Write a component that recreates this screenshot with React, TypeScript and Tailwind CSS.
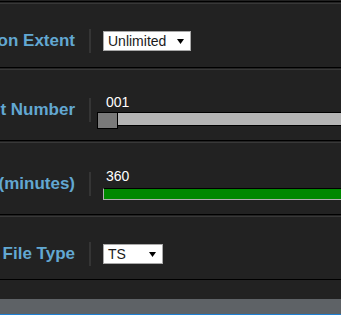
const font = { fontFamily: '"Liberation Sans", Arial, sans-serif' };

function Label({ text }: { text: string }) {
  return (
    <div className="flex h-6 w-[75px] shrink-0 items-center justify-end whitespace-nowrap text-[17px] font-bold text-[#62a8d2]">
      {text}
    </div>
  );
}

function Divider() {
  return <div className="ml-[14px] h-6 w-[2px] shrink-0 bg-[#353535]" />;
}

function FakeSelect({ value, width }: { value: string; width: string }) {
  return (
    <div
      className={`flex h-5 ${width} items-center justify-between border border-[#a9a9a9] bg-white pl-[4px] pr-[6px] text-[14px] leading-[18px] text-[#1a1a1a]`}
    >
      <span>{value}</span>
      <svg width="7" height="5" viewBox="0 0 7 5">
        <path d="M0 0 L7 0 L3.5 5 Z" fill="#000" />
      </svg>
    </div>
  );
}

function Row({
  label,
  height,
  pt,
  children,
}: {
  label: string;
  height: string;
  pt: string;
  children: React.ReactNode;
}) {
  return (
    <div
      className={`mt-px flex items-start border-t border-b border-t-[#383838] border-b-black ${height} ${pt}`}
    >
      <Label text={label} />
      <Divider />
      <div className="ml-[12px]">{children}</div>
    </div>
  );
}

export default function App() {
  return (
    <div
      className="h-[315px] w-[341px] overflow-hidden bg-[#222222]"
      style={font}
    >
      <div className="h-[2px] border-b border-black" />

      <Row label="Rotation Extent" height="h-[65px]" pt="pt-[25px]">
        <div className="flex h-6 items-center">
          <FakeSelect value="Unlimited" width="w-[88px]" />
        </div>
      </Row>

      <Row label="Start Segment Number" height="h-[72px]" pt="pt-[28px]">
        <div className="-mt-[3px] w-[280px]">
          <div className="pl-[3px] text-[14px] leading-[15px] text-white">001</div>
          <div className="relative mt-[2px] h-[17px]">
            <div className="mt-px h-[14px] border border-black bg-[#b5b5b5]" />
            <div className="absolute -left-[6px] top-0 h-[17px] w-[21px] border border-black bg-[#7a7a7a]" />
          </div>
        </div>
      </Row>

      <Row label="Segment Duration (minutes)" height="h-[73px]" pt="pt-[29px]">
        <div className="-mt-[3px] w-[280px]">
          <div className="pl-[3px] text-[14px] leading-[15px] text-white">360</div>
          <div className="mt-[4px] h-[12px] border-t border-l border-b border-t-black border-l-[#b0b0b0] border-b-[#b0b0b0] bg-[#008800]" />
        </div>
      </Row>

      <Row label="Output File Type" height="h-[64px]" pt="pt-[25px]">
        <div className="flex h-6 items-center">
          <FakeSelect value="TS" width="w-[60px]" />
        </div>
      </Row>

      <div className="mt-[19px] h-[15px] bg-[#5e6266]" />
      <div className="h-[2px] bg-[#1f7fd2]" />
    </div>
  );
}
